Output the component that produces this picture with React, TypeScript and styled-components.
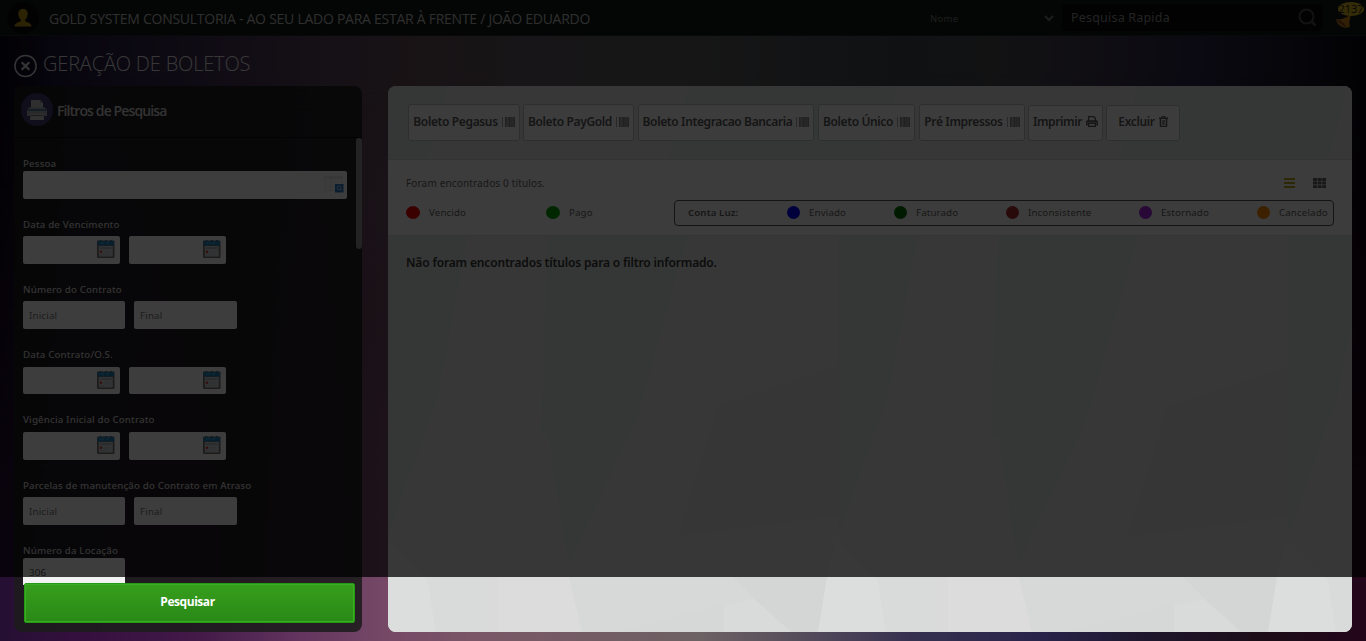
import React from "react";
import styled, { createGlobalStyle } from "styled-components";

const Global = createGlobalStyle`
  *, *::before, *::after { box-sizing: border-box; }
  html, body { margin: 0; padding: 0; background: #000; overflow: hidden; }
  body { font-family: "Noto Sans", "Open Sans", sans-serif; }
  button, input { font-family: inherit; }
`;

const Page = styled.div`
  position: relative;
  width: 1366px;
  height: 641px;
  overflow: hidden;
  display: flex;
  flex-direction: column;
  background: linear-gradient(90deg, #250f33 0, #36103f 90px, #431a48 200px, #63355f 300px, #754766 380px, #7a5766 480px,
    #6c6163 700px, #554d5b 800px, #373150 910px, #29234a 1040px, #1f1830 1130px, #1c0d18 1260px, #24061a 1366px);
  &::before {
    content: "";
    position: absolute;
    inset: 0;
    background: linear-gradient(90deg, #08050f 0, #1c1434 50px, #2c2244 120px, #453454 230px, #584458 330px, #604a54 410px,
      #5c565c 530px, #58585a 700px, #484c52 830px, #3e464c 900px, #48484e 990px, #403a4c 1090px, #2c2848 1200px, #1c182c 1290px, #08060f 1366px);
    mask-image: linear-gradient(180deg, #000 0, #000 70px, transparent 520px);
  }
`;

const Shade = styled.div`
  position: absolute;
  left: 0;
  top: 0;
  width: 100%;
  height: 577px;
  background: rgba(0, 0, 0, 0.75);
  pointer-events: none;
`;

const Header = styled.header`
  position: relative;
  height: 36px;
  flex: none;
  display: flex;
  align-items: center;
  background: #131915;
  border-bottom: 1px solid #1c211e;
`;

const Avatar = styled.div`
  width: 32px;
  height: 32px;
  margin-left: 7px;
  border-radius: 50%;
  background: #090b0a;
  display: flex;
  align-items: center;
  justify-content: center;
`;

const Company = styled.div`
  margin-left: 10px;
  width: 881px;
  padding-top: 3px;
  font: 400 14px/20px "Open Sans", sans-serif;
  letter-spacing: -0.26px;
  color: #b8b8b8;
  white-space: nowrap;
`;

const Select = styled.div`
  width: 132px;
  padding-top: 2px;
  display: flex;
  align-items: center;
  font-size: 9.5px;
  letter-spacing: 0.3px;
  color: #727272;
  svg { margin-left: auto; margin-right: 8px; }
`;

const Search = styled.div`
  width: 261px;
  height: 27px;
  padding: 0 6px 0 9px;
  border-radius: 3px;
  background: #060807;
  display: flex;
  align-items: center;
  justify-content: space-between;
  font-size: 12.5px;
  letter-spacing: 0.2px;
  color: #8c8c8c;
`;

const Bell = styled.div`
  position: relative;
  width: 30px;
  height: 30px;
  margin-left: 13px;
  svg { position: absolute; left: 0; top: 12px; }
`;

const BellBadge = styled.span`
  position: absolute;
  left: 2px;
  top: -1px;
  width: 26px;
  height: 14px;
  border-radius: 50%;
  background: #cfae22;
  font-size: 11px;
  line-height: 14px;
  text-align: center;
  color: #2b2410;
`;

const TitleBar = styled.div`
  position: relative;
  height: 50px;
  flex: none;
  padding: 9px 0 0 14px;
  display: flex;
  align-items: center;
  gap: 6px;
`;

const PageTitle = styled.h1`
  margin: 0 0 3px;
  font: 300 20px/28px "Open Sans", sans-serif;
  letter-spacing: -0.18px;
  color: #dedede;
  white-space: nowrap;
`;

const Body = styled.main`
  position: relative;
  display: flex;
  gap: 26px;
  height: 546px;
  padding-left: 14px;
`;

const Filters = styled.aside`
  width: 348px;
  height: 546px;
  border-radius: 8px;
  background: rgba(29, 27, 28, 0.88);
  overflow: hidden;
`;

const FiltersHead = styled.div`
  height: 52px;
  padding: 0 0 4px 7px;
  display: flex;
  align-items: center;
  gap: 4px;
  border-bottom: 1px solid #0a0a0a;
`;

const PrinterDisc = styled.div`
  width: 32px;
  height: 33px;
  border-radius: 50%;
  background: #463a72;
  display: flex;
  align-items: center;
  justify-content: center;
`;

const FiltersTitle = styled.h2`
  margin: 0;
  padding-top: 3px;
  font: 600 14px/20px "Open Sans", sans-serif;
  letter-spacing: -0.88px;
  color: #c8c8c8;
`;

const Scroll = styled.div`
  height: 447px;
  overflow: hidden;
  display: flex;
  justify-content: space-between;
  padding: 0 0 0 9px;
`;

const Thumb = styled.div`
  width: 6px;
  height: 111px;
  border-radius: 3px;
  background: #8c8c8c;
`;

const Form = styled.div`
  padding-top: 19px;
`;

const Group = styled.div<{ $h: number }>`
  height: ${(p) => p.$h}px;
`;

const Label = styled.label`
  display: block;
  height: 14px;
  font-size: 9.7px;
  line-height: 13px;
  font-weight: 500;
  letter-spacing: 0.16px;
  color: #ccc;
  white-space: nowrap;
`;

const Fields = styled.div<{ $top: number }>`
  display: flex;
  gap: 9px;
  margin-top: ${(p) => p.$top}px;
`;

const Field = styled.div<{ $w: number; $h?: number; $value?: boolean; $right?: number }>`
  width: ${(p) => p.$w}px;
  height: ${(p) => p.$h ?? 28}px;
  padding: 0 ${(p) => p.$right ?? 5}px 0 6px;
  border-radius: 2px;
  background: #f2f2f2;
  display: flex;
  align-items: center;
  font-size: 9.8px;
  letter-spacing: 0.15px;
  color: ${(p) => (p.$value ? "#505050" : "#747474")};
  svg { margin-left: auto; margin-bottom: 2px; }
`;

const SearchButton = styled.button`
  position: relative;
  display: block;
  width: 331px;
  height: 40px;
  margin: -2px 0 0 10px;
  border: 1px solid #249a14;
  border-radius: 2px;
  box-shadow: inset 0 0 0 1px #3aae20;
  background: linear-gradient(#379e1c, #298917);
  color: #fff;
  font: 700 12px/16px "Open Sans", sans-serif;
  letter-spacing: -0.45px;
  padding: 0 4px 2px 0;
`;

const Content = styled.section`
  position: relative;
  width: 964px;
  height: 546px;
  border-radius: 8px;
  overflow: hidden;
  background: #dadcdb;
`;

const Facets = styled.svg`
  position: absolute;
  inset: 0;
`;

const Toolbar = styled.div`
  position: relative;
  height: 74px;
  padding: 18px 0 0 20px;
  display: flex;
  border-bottom: 1px solid #c6c9c8;
`;

const ToolButton = styled.button<{ $w: number; $gap: number; $short?: boolean }>`
  width: ${(p) => p.$w}px;
  height: ${(p) => (p.$short ? 36 : 37)}px;
  margin: ${(p) => (p.$short ? 1 : 0)}px ${(p) => p.$gap}px 0 0;
  padding: 0 0 ${(p) => (p.$short ? 3 : 2)}px;
  border: 1px solid #b4b7b6;
  border-radius: 3px;
  background: #f0f0f0;
  display: flex;
  align-items: center;
  justify-content: center;
  gap: 4px;
  font-size: 12px;
  font-weight: 600;
  letter-spacing: -0.37px;
  color: #565656;
  white-space: nowrap;
`;

const Summary = styled.div`
  position: relative;
  height: 76px;
  background: #eeeeee;
  border-bottom: 1px solid #cfd1d0;
  padding: 15px 18px 0;
`;

const SummaryTop = styled.div`
  height: 16px;
  display: flex;
  align-items: center;
  font-size: 10px;
  letter-spacing: 0.15px;
  color: #606060;
`;

const Views = styled.div`
  margin-left: auto;
  margin-right: 8px;
  display: flex;
  align-items: center;
  gap: 18px;
`;

const LegendRow = styled.div`
  margin-top: 9px;
  display: flex;
  height: 26px;
`;

const LegendItem = styled.div<{ $w: number; $c: string; $dot?: number }>`
  width: ${(p) => p.$w}px;
  height: 24px;
  display: flex;
  align-items: center;
  gap: 9px;
  font-size: 9.7px;
  letter-spacing: 0.15px;
  color: #606060;
  white-space: nowrap;
  &::before {
    content: "";
    flex: none;
    width: ${(p) => p.$dot ?? 13}px;
    height: 13px;
    border-radius: 50%;
    background: ${(p) => p.$c};
  }
`;

const LightBox = styled.div`
  width: 660px;
  height: 26px;
  padding-bottom: 2px;
  border: 1px solid #505050;
  border-radius: 4px;
  display: flex;
  align-items: center;
`;

const LightTitle = styled.span`
  width: 99px;
  margin-left: 13px;
  font-size: 9.7px;
  line-height: 13px;
  font-weight: 600;
  letter-spacing: 0.1px;
  color: #5c5c5c;
`;

const Empty = styled.p`
  position: relative;
  margin: 18px 0 0 18px;
  font-size: 12px;
  line-height: 18px;
  font-weight: 600;
  letter-spacing: -0.16px;
  color: #343434;
`;

const CalendarIcon = () => (
  <svg width="18" height="18" viewBox="0 0 18 18">
    <rect x="0" y="0.500" width="17.500" height="17.500" rx="1" fill="#78706e" />
    <path d="M1.800 6h14v10.500h-14z" fill="#c4ccce" />
    <path d="M0.500 1h16.500v4.500H0.500z" fill="#2380b4" />
    <path d="M2.500 0.500h2M8 0.500h2M13 0.500h2" stroke="#4f6a78" />
    <path d="M3 3h4M9 3h3" stroke="#5aa6d0" strokeWidth="0.800" />
    <path d="M3 8h11.500" stroke="#9aa1a3" strokeWidth="1.400" />
    <path d="M7 12h6M3 14.800h8" stroke="#b4babc" strokeWidth="0.800" />
    <rect x="2.800" y="10.600" width="2.400" height="2.400" rx="1" fill="#d83a30" />
  </svg>
);

const LookupIcon = () => (
  <svg width="20" height="18" viewBox="0 0 20 18">
    <rect x="0.500" y="1.500" width="18" height="14" fill="#ededed" stroke="#e0e0e0" />
    <path d="M1 2h18v2H1z" fill="#dedede" />
    <path d="M7 4v12" stroke="#e4e2dc" />
    <rect x="11" y="9" width="8.500" height="8.500" fill="#2b79bd" />
    <circle cx="15" cy="12.800" r="1.900" fill="none" stroke="#9cc4e4" />
    <path d="M16.500 14.300l1.300 1.500" stroke="#9cc4e4" />
  </svg>
);

const PrinterBadge = () => (
  <svg width="20" height="20" viewBox="0 0 20 20">
    <path d="M4 0h9l3 3v6H4z" fill="#bdbdbd" />
    <path d="M13 0v3h3z" fill="#8f8f8f" />
    <path d="M2 7.500h16l2 3v5.500H0v-5.500z" fill="#a0a4a8" />
    <path d="M1 9h18v2H1z" fill="#4f7292" />
    <path d="M3.500 14h13l.5 6H3z" fill="#c4c4c4" />
    <path d="M3.500 15.500h13" stroke="#6c6c6c" />
  </svg>
);

const Barcode = () => (
  <svg width="13" height="10" viewBox="0 0 13 10" shapeRendering="crispEdges">
    <rect x="3" width="10" height="10" fill="#9c9c9e" />
    <rect width="1" height="10" fill="#a4a4a4" />
    <path d="M3 0h1v10H3zM7 0h1v10H7zM12 0h1v10h-1z" fill="#848488" />
    <path d="M5 0h1v10H5z" fill="#b0aca8" />
    <path d="M9 0h1v10H9z" fill="#8e8e98" />
  </svg>
);

const PrintGlyph = () => (
  <svg width="12" height="11" viewBox="0 0 12 11" fill="none" stroke="#565656" strokeWidth="1.300">
    <path d="M2.600 5V.7h5l1.800 1.600V5" />
    <path d="M2.400 8.600H.7V5.900q0-.9.9-.9h8.800q.9 0 .9.900v2.700H9.600" />
    <path d="M1 5.800h10" />
    <path d="M2.600 7.300h6.800v3H2.600z" />
  </svg>
);

const TrashGlyph = () => (
  <svg width="9" height="11" viewBox="0 0 9 11" fill="none" stroke="#565656">
    <path d="M0 2.300h9" strokeWidth="1.400" />
    <path d="M2.900 2V.6h3.200V2" />
    <path d="M1.400 3v6.700q0 .7.700.7h4.800q.7 0 .7-.7V3" strokeWidth="1.400" />
    <path d="M3.300 4v5M4.500 4v5M5.700 4v5" strokeWidth=".7" />
  </svg>
);

const tools = [
  { text: "Boleto Pegasus", w: 112, gap: 3 },
  { text: "Boleto PayGold", w: 111, gap: 4 },
  { text: "Boleto Integracao Bancaria", w: 176, gap: 4 },
  { text: "Boleto Único", w: 97, gap: 4 },
  { text: "Pré Impressos", w: 106, gap: 3 },
];

const lights = [
  { text: "Enviado", c: "#0000f0", w: 107 },
  { text: "Faturado", c: "#006a00", w: 112 },
  { text: "Inconsistente", c: "#a52a2a", w: 133 },
  { text: "Estornado", c: "#9a20d8", w: 118 },
  { text: "Cancelado", c: "#f08000", w: 76 },
];

const Dates = ({ label, h, top, fieldHeight }: { label: string; h: number; top: number; fieldHeight?: number }) => (
  <Group $h={h}>
    <Label>{label}</Label>
    <Fields $top={top}>
      <Field $w={97} $h={fieldHeight}><CalendarIcon /></Field>
      <Field $w={97} $h={fieldHeight}><CalendarIcon /></Field>
    </Fields>
  </Group>
);

const Range = ({ label, h, top }: { label: string; h: number; top: number }) => (
  <Group $h={h}>
    <Label>{label}</Label>
    <Fields $top={top}>
      <Field $w={102}>Inicial</Field>
      <Field $w={103}>Final</Field>
    </Fields>
  </Group>
);

const FacetArt = () => (
  <Facets width="964" height="546">
    <defs>
      <pattern id="facets" width="450" height="546" patternUnits="userSpaceOnUse">
        <rect width="450" height="546" fill="#d9dbda" />
        <path d="M0 0h60L40 74H0z" fill="#d3dad7" />
        <path d="M300 0h150v74H280z" fill="#d4dad7" />
        <path d="M90 150h50l18 100-90 10z" fill="#dcdcdc" />
        <path d="M0 150h80l-30 160L0 450z" fill="#d3dad7" />
        <path d="M160 150h140l-50 180-70 150-30-60z" fill="#d3dad7" />
        <path d="M300 150h100l-60 140-90 40z" fill="#d9d9d9" />
        <path d="M330 320l120-40v150l-160 20z" fill="#d6d6d6" />
        <path d="M60 310l100 40 20 130-70 66H45z" fill="#dadada" />
        <path d="M0 454l40 40 8 52H0z" fill="#dbdedc" />
        <path d="M40 494l60-10v62H48z" fill="#d9dbda" />
        <path d="M110 480h69l15 66h-84z" fill="#dddcdc" />
        <path d="M179 484l10-5 100-25h160l-10 37-9 55H194z" fill="#d7d9d8" />
        <path d="M345 491h94l-9 55h-27l-36-33z" fill="#d3d6d4" />
        <path d="M439 491l9-37h2v92h-20z" fill="#dbdedc" />
        <path d="M230 546l106-28v28z" fill="#d5d8d7" />
        <path d="M336 520l30-7 37 33h-67z" fill="#d9dbda" />
      </pattern>
    </defs>
    <rect width="964" height="546" fill="url(#facets)" />
  </Facets>
);

export default function App() {
  return (
    <Page>
      <Global />
      <Header>
        <Avatar>
          <svg width="18" height="18" viewBox="0 0 18 18" fill="#b08a10">
            <path d="M9 0c3 0 5 2 4.600 5.400C13.300 8 12.400 9.600 11.200 10.600V12c1 1.500 6.300 1.600 6.300 5.500H.5C.5 13.600 5.800 13.500 6.800 12v-1.400C5.600 9.600 4.700 8 4.400 5.400 4 2 6 0 9 0z" />
          </svg>
        </Avatar>
        <Company>GOLD SYSTEM CONSULTORIA - AO SEU LADO PARA ESTAR À FRENTE / JOÃO EDUARDO</Company>
        <Select>
          Nome
          <svg width="10" height="7" viewBox="0 0 10 7" fill="none" stroke="#727272" strokeWidth="2">
            <path d="M1 1l4 4 4-4" />
          </svg>
        </Select>
        <Search>
          Pesquisa Rapida
          <svg width="19" height="19" viewBox="0 0 19 19" fill="none" stroke="#4a4a4a" strokeWidth="2">
            <circle cx="8.500" cy="8.500" r="7" />
            <path d="M13.500 13.500l4 4" strokeWidth="2.500" />
          </svg>
        </Search>
        <Bell>
          <svg width="16" height="13" viewBox="0 0 16 13">
            <path d="M0 4Q8 5 14 0q1 3-.5 5-.5 4 .5 6.500-4 2-7 .8Q1 10 0 4z" fill="#c8801a" />
            <ellipse cx="5.500" cy="8" rx="1.500" ry="6" transform="rotate(-52 5.500 8)" fill="#8a4a18" />
          </svg>
          <BellBadge>2137</BellBadge>
        </Bell>
      </Header>
      <TitleBar>
        <svg width="23" height="24" viewBox="0 0 23 24" fill="none" stroke="#d4d4d4">
          <circle cx="11.500" cy="12" r="10.600" strokeWidth="1.500" />
          <path d="M7.700 8.200l7.600 7.600M15.300 8.200l-7.600 7.600" strokeWidth="2.200" />
        </svg>
        <PageTitle>GERAÇÃO DE BOLETOS</PageTitle>
      </TitleBar>
      <Body>
        <Filters>
          <FiltersHead>
            <PrinterDisc><PrinterBadge /></PrinterDisc>
            <FiltersTitle>Filtros de Pesquisa</FiltersTitle>
          </FiltersHead>
          <Scroll>
            <Form>
              <Group $h={61}>
                <Label>Pessoa</Label>
                <Fields $top={0}><Field $w={324} $right={3}><LookupIcon /></Field></Fields>
              </Group>
              <Dates label="Data de Vencimento" h={65} top={4} />
              <Range label="Número do Contrato" h={65} top={4} />
              <Dates label="Data Contrato/O.S." h={65} top={5} fieldHeight={27} />
              <Dates label="Vigência Inicial do Contrato" h={66} top={5} />
              <Range label="Parcelas de manutenção do Contrato em Atraso" h={65} top={4} />
              <Group $h={42}>
                <Label>Número da Locação</Label>
                <Fields $top={0}><Field $w={102} $value>306</Field></Fields>
              </Group>
            </Form>
            <Thumb />
          </Scroll>
          <SearchButton>Pesquisar</SearchButton>
        </Filters>
        <Content>
          <FacetArt />
          <Toolbar>
            {tools.map((t) => (
              <ToolButton key={t.text} $w={t.w} $gap={t.gap}>{t.text}<Barcode /></ToolButton>
            ))}
            <ToolButton $w={75} $gap={3} $short>Imprimir<PrintGlyph /></ToolButton>
            <ToolButton $w={74} $gap={0} $short>Excluir<TrashGlyph /></ToolButton>
          </Toolbar>
          <Summary>
            <SummaryTop>
              Foram encontrados 0 títulos.
              <Views>
                <svg width="11" height="10" viewBox="0 0 11 10" fill="#b09c10">
                  <path d="M0 0h11v2H0zM0 4h11v2H0zM0 8h11v2H0z" />
                </svg>
                <svg width="13" height="10" viewBox="0 0 13 10" fill="#606060">
                  <path d="M0 0h4v3H0zM4.600 0h4v3h-4zM9.200 0H13v3H9.200zM0 3.600h4v3H0zM4.600 3.600h4v3h-4zM9.200 3.600H13v3H9.200zM0 7.200h4V10H0zM4.600 7.200h4V10h-4zM9.200 7.200H13V10H9.200z" />
                </svg>
              </Views>
            </SummaryTop>
            <LegendRow>
              <LegendItem $w={140} $c="#e60000" $dot={14}>Vencido</LegendItem>
              <LegendItem $w={128} $c="#009a00" $dot={14}>Pago</LegendItem>
              <LightBox>
                <LightTitle>Conta Luz:</LightTitle>
                {lights.map((l) => (
                  <LegendItem key={l.text} $w={l.w} $c={l.c}>{l.text}</LegendItem>
                ))}
              </LightBox>
            </LegendRow>
          </Summary>
          <Empty>Não foram encontrados títulos para o filtro informado.</Empty>
        </Content>
      </Body>
      <Shade />
    </Page>
  );
}
